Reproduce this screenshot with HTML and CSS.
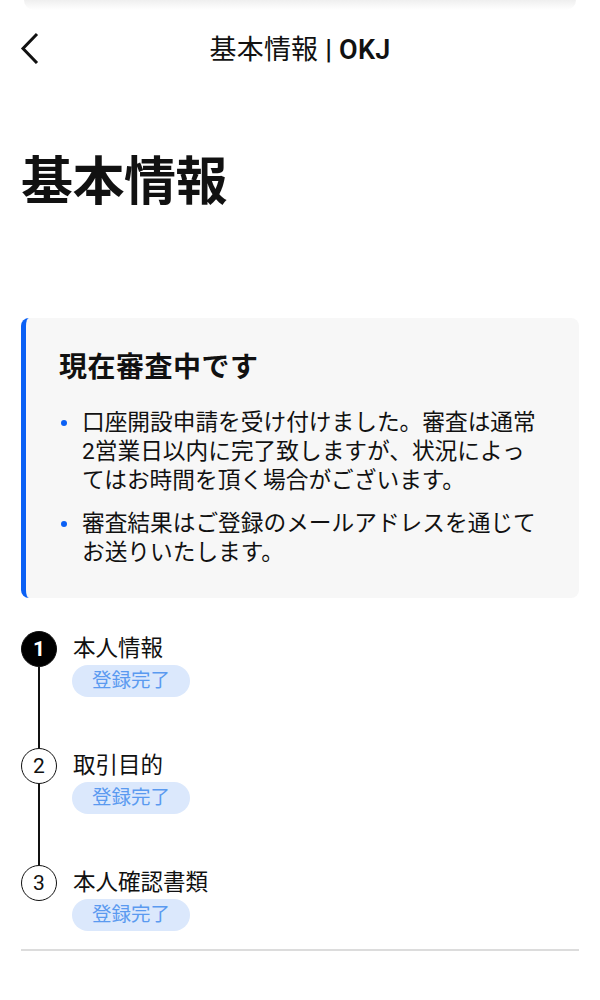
FILE: index.html
```html
<!DOCTYPE html>
<html lang="ja">
<head>
<meta charset="utf-8">
<title>基本情報 | OKJ</title>
<link rel="stylesheet" href="styles.css">
</head>
<body>
<div class="sheet-edge"></div>
<header class="nav">
  <button class="back" aria-label="戻る">
    <svg width="22" height="32" viewBox="0 0 22 32"><path d="M17 2 L3 16.5 L17 31" fill="none" stroke="#111" stroke-width="3" stroke-linecap="butt" stroke-linejoin="miter"/></svg>
  </button>
  <div class="nav-title">基本情報 <span class="brand">| OKJ</span></div>
  <div></div>
</header>
<main class="page">
  <h1 class="page-title">基本情報</h1>
  <section class="notice">
    <h2 class="notice-title">現在審査中です</h2>
    <ul class="notice-list">
      <li class="notice-item"><span class="notice-text">口座開設申請を受け付けました。審査は通常2営業日以内に完了致しますが、状況によってはお時間を頂く場合がございます。</span></li>
      <li class="notice-item"><span class="notice-text">審査結果はご登録のメールアドレスを通じてお送りいたします。</span></li>
    </ul>
  </section>
  <ol class="steps">
    <li class="step">
      <span class="step-num active">1</span>
      <div class="step-body">
        <div class="step-title">本人情報</div>
        <span class="badge">登録完了</span>
      </div>
    </li>
    <li class="step">
      <span class="step-num">2</span>
      <div class="step-body">
        <div class="step-title">取引目的</div>
        <span class="badge">登録完了</span>
      </div>
    </li>
    <li class="step">
      <span class="step-num">3</span>
      <div class="step-body">
        <div class="step-title">本人確認書類</div>
        <span class="badge">登録完了</span>
      </div>
    </li>
  </ol>
  <hr class="divider">
</main>
</body>
</html>
```
FILE: styles.css
```css
* { box-sizing: border-box; }
html, body { margin: 0; padding: 0; background: #fff; }
body {
  font-family: Roboto, "Noto Sans CJK JP", sans-serif;
  color: #111;
  width: 600px;
}
.sheet-edge {
  height: 10px;
  margin: 0 24px;
  background: linear-gradient(#efefef, rgba(255,255,255,0));
  border-radius: 0 0 40px 40px;
}
.nav {
  height: 84px;
  display: grid;
  grid-template-columns: 1fr auto 1fr;
  align-items: center;
  padding: 0 0 0 20px;
}
.back {
  justify-self: start;
  background: none;
  border: 0;
  padding: 0;
  margin: 0;
  width: 22px;
  height: 32px;
  display: flex;
  margin-top: -8px;
}
.nav-title {
  font-size: 27px;
  font-weight: 400;
  letter-spacing: 0.2px;
  margin-top: -9px;
  margin-left: -20px;
}
.brand { font-weight: 600; }
.page { padding: 0 21px; }
.page-title {
  margin: 53px 0 0;
  font-size: 52px;
  line-height: 72px;
  font-weight: 700;
  letter-spacing: -0.5px;
}
.notice {
  margin-top: 99px;
  background: #f7f7f7;
  border-left: 5px solid #0a60f5;
  border-radius: 8px;
  padding: 30px 39px 31px 33px;
}
.notice-title {
  margin: 0;
  font-size: 28px;
  line-height: 40px;
  font-weight: 700;
  letter-spacing: 0.5px;
}
.notice-list {
  list-style: none;
  margin: 20px 0 0;
  padding: 0;
  display: flex;
  flex-direction: column;
  gap: 14px;
}
.notice-item {
  display: flex;
  align-items: flex-start;
  font-size: 22.7px;
  line-height: 29px;
  color: #111;
}
.notice-item::before {
  content: "";
  flex: 0 0 6px;
  width: 6px;
  height: 6px;
  border-radius: 50%;
  background: #0a60f5;
  margin: 12px 15px 0 2px;
}
.notice-text { flex: 1; }
.steps {
  list-style: none;
  margin: 33px 0 0;
  padding: 0;
  display: flex;
  flex-direction: column;
  gap: 51px;
}
.step {
  position: relative;
  display: flex;
  gap: 16px;
  align-items: flex-start;
}
.step:not(:last-child)::after {
  content: "";
  position: absolute;
  left: 17px;
  top: 36px;
  width: 2px;
  height: 81px;
  background: #111;
}
.step-num {
  flex: 0 0 36px;
  width: 36px;
  height: 36px;
  border-radius: 50%;
  border: 1.8px solid #111;
  display: flex;
  align-items: center;
  justify-content: center;
  font-size: 21px;
  line-height: 1;
  background: #fff;
}
.step-num.active {
  background: #000;
  color: #fff;
  font-weight: 700;
}
.step-body {
  display: flex;
  flex-direction: column;
  align-items: flex-start;
}
.step-title {
  font-size: 22.5px;
  line-height: 34px;
}
.badge {
  display: inline-block;
  height: 32px;
  line-height: 32px;
  padding: 0 20px;
  border-radius: 16px;
  background: #dbe8fc;
  color: #5a9af0;
  font-size: 19.5px;
  margin-left: -1px;
}
.divider {
  border: 0;
  height: 2px;
  background: #dcdcdc;
  margin: 18px 0 0;
}
```
